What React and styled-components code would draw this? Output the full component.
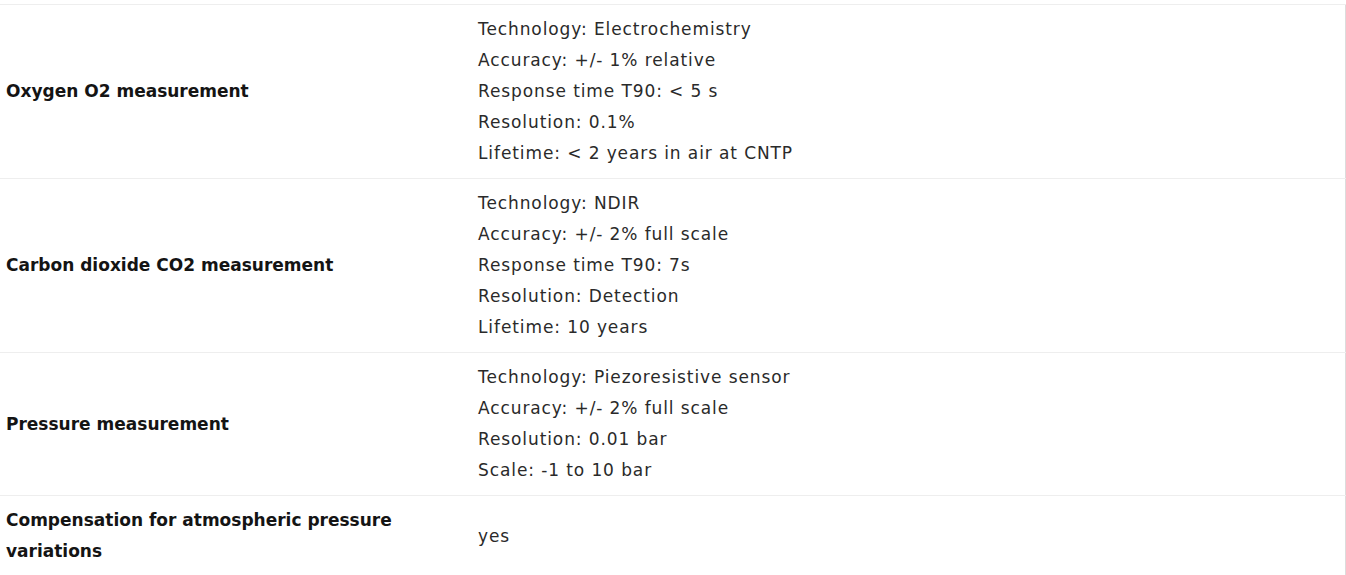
import React from "react";
import styled, { createGlobalStyle } from "styled-components";

const Global = createGlobalStyle`
  html, body { margin: 0; padding: 0; background: #fff; }
  body { font-family: "DejaVu Sans", "Open Sans", sans-serif; }
`;

const Page = styled.div`
  padding-top: 4px;
  width: 1346px;
  box-sizing: border-box;
`;

const Table = styled.table`
  width: 100%;
  border-collapse: collapse;
  border-right: 1px solid #dcdcdc;
  table-layout: fixed;
`;

const Row = styled.tr`
  border-top: 1px solid #eeeeee;
`;

const LabelCell = styled.th`
  width: 472px;
  box-sizing: border-box;
  text-align: left;
  vertical-align: middle;
  padding: 9px 6px;
  font-size: 17px;
  line-height: 31px;
  font-weight: 700;
  color: #141414;
`;

const ValueCell = styled.td`
  vertical-align: middle;
  padding: 9px 6px;
  font-size: 17px;
  line-height: 31px;
  font-weight: 400;
  letter-spacing: 0.9px;
  color: #2a2a2a;
`;

const Line = styled.div``;

const rows = [
  {
    label: "Oxygen O2 measurement",
    values: [
      "Technology: Electrochemistry",
      "Accuracy: +/- 1% relative",
      "Response time T90: < 5 s",
      "Resolution: 0.1%",
      "Lifetime: < 2 years in air at CNTP",
    ],
  },
  {
    label: "Carbon dioxide CO2 measurement",
    values: [
      "Technology: NDIR",
      "Accuracy: +/- 2% full scale",
      "Response time T90: 7s",
      "Resolution: Detection",
      "Lifetime: 10 years",
    ],
  },
  {
    label: "Pressure measurement",
    values: [
      "Technology: Piezoresistive sensor",
      "Accuracy: +/- 2% full scale",
      "Resolution: 0.01 bar",
      "Scale: -1 to 10 bar",
    ],
  },
  {
    label: "Compensation for atmospheric pressure variations",
    values: ["yes"],
  },
];

export default function App() {
  return (
    <Page>
      <Global />
      <Table>
        <tbody>
          {rows.map((r) => (
            <Row key={r.label}>
              <LabelCell>{r.label}</LabelCell>
              <ValueCell>
                {r.values.map((v) => (
                  <Line key={v}>{v}</Line>
                ))}
              </ValueCell>
            </Row>
          ))}
        </tbody>
      </Table>
    </Page>
  );
}
